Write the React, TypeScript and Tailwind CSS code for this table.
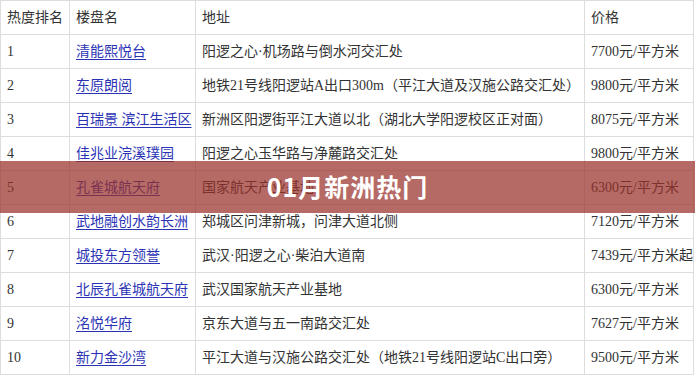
const ROWS = [
  { rank: '1', name: '清能熙悦台', addr: '阳逻之心·机场路与倒水河交汇处', price: '7700元/平方米' },
  { rank: '2', name: '东原朗阅', addr: '地铁21号线阳逻站A出口300m（平江大道及汉施公路交汇处）', price: '9800元/平方米' },
  { rank: '3', name: '百瑞景 滨江生活区', addr: '新洲区阳逻街平江大道以北（湖北大学阳逻校区正对面）', price: '8075元/平方米' },
  { rank: '4', name: '佳兆业浣溪璞园', addr: '阳逻之心玉华路与净麓路交汇处', price: '9800元/平方米' },
  { rank: '5', name: '孔雀城航天府', addr: '国家航天产业基地', price: '6300元/平方米' },
  { rank: '6', name: '武地融创水韵长洲', addr: '郑城区问津新城，问津大道北侧', price: '7120元/平方米' },
  { rank: '7', name: '城投东方领誉', addr: '武汉·阳逻之心·柴泊大道南', price: '7439元/平方米起' },
  { rank: '8', name: '北辰孔雀城航天府', addr: '武汉国家航天产业基地', price: '6300元/平方米' },
  { rank: '9', name: '洺悦华府', addr: '京东大道与五一南路交汇处', price: '7627元/平方米' },
  { rank: '10', name: '新力金沙湾', addr: '平江大道与汉施公路交汇处（地铁21号线阳逻站C出口旁）', price: '9500元/平方米' },
]

const cell = 'border border-[#dddddd] px-[6px] h-[34px] align-middle whitespace-nowrap'

export default function App() {
  return (
    <div className="relative w-[695px] h-[375px] bg-white overflow-hidden font-['Liberation_Serif','Noto_Sans_CJK_SC',serif] text-[14px] text-[#333333]">
      <table className="w-[693px] border-collapse table-fixed">
        <colgroup>
          <col className="w-[69px]" />
          <col className="w-[126px]" />
          <col className="w-[389px]" />
          <col className="w-[109px]" />
        </colgroup>
        <thead>
          <tr>
            <th className={`${cell} font-normal text-left`}>热度排名</th>
            <th className={`${cell} font-normal text-left`}>楼盘名</th>
            <th className={`${cell} font-normal text-left`}>地址</th>
            <th className={`${cell} font-normal text-left`}>价格</th>
          </tr>
        </thead>
        <tbody>
          {ROWS.map((r) => (
            <tr key={r.rank}>
              <td className={cell}>{r.rank}</td>
              <td className={cell}>
                <a href="#" className="text-[#2b33b5] underline underline-offset-[3px]">
                  {r.name}
                </a>
              </td>
              <td className={cell}>{r.addr}</td>
              <td className={cell}>{r.price}</td>
            </tr>
          ))}
        </tbody>
      </table>

      {/* 标题遮罩 */}
      <div className="absolute left-0 right-0 top-[161px] h-[52px] bg-[rgba(153,49,42,0.72)] flex items-center justify-center">
        <span className="text-white font-bold text-[25px] tracking-[1px] font-['Noto_Sans_CJK_SC',sans-serif]">
          01月新洲热门
        </span>
      </div>
    </div>
  )
}
